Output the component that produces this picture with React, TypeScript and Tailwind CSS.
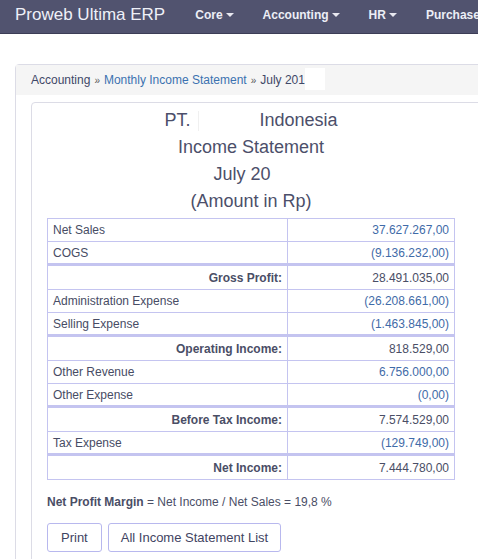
import React from "react"

type Row = { label: string; value: string; total?: boolean }

const rows: Row[] = [
  { label: "Net Sales", value: "37.627.267,00" },
  { label: "COGS", value: "(9.136.232,00)" },
  { label: "Gross Profit:", value: "28.491.035,00", total: true },
  { label: "Administration Expense", value: "(26.208.661,00)" },
  { label: "Selling Expense", value: "(1.463.845,00)" },
  { label: "Operating Income:", value: "818.529,00", total: true },
  { label: "Other Revenue", value: "6.756.000,00" },
  { label: "Other Expense", value: "(0,00)" },
  { label: "Before Tax Income:", value: "7.574.529,00", total: true },
  { label: "Tax Expense", value: "(129.749,00)" },
  { label: "Net Income:", value: "7.444.780,00", total: true },
]

function Caret() {
  return <span className="ml-[3px] inline-block border-x-[4px] border-t-[4px] border-x-transparent border-t-[#e8e8f0] align-middle" />
}

function Navbar() {
  return (
    <nav className="flex h-[34px] items-center overflow-hidden whitespace-nowrap border-b border-[#3c3d56] bg-[#51536f] pb-[4px]">
      <span className="ml-[15px] text-[17px] text-[#eef0f8]">Proweb Ultima ERP</span>
      <div className="ml-[30px] flex items-center gap-[29px] text-[12px] font-bold text-[#eceef6]">
        <span>Core<Caret /></span>
        <span>Accounting<Caret /></span>
        <span>HR<Caret /></span>
        <span>Purchase</span>
      </div>
    </nav>
  )
}

export default function App() {
  return (
    <div className="h-[559px] w-[478px] overflow-hidden bg-white font-['Liberation_Sans',Arial,sans-serif]">
      <Navbar />
      <div className="ml-[15px] mt-[30px] w-[560px] rounded-[4px] border border-[#dcdce6] pb-6">
        <div className="flex h-[30px] items-center bg-[#f5f5f5] px-[15px] text-[12px] text-[#3f4868]">
          <span>Accounting</span>
          <span className="mx-[4px] text-[10px] text-[#555]">»</span>
          <span className="text-[#3b72b0]">Monthly Income Statement</span>
          <span className="mx-[4px] text-[10px] text-[#555]">»</span>
          <span>July 201</span>
          <span className="-mt-[2px] h-[22px] w-[20px] bg-white" />
        </div>
        <div className="ml-[15px] mt-[7px] w-[520px] rounded-[4px] border border-[#dcdce6] px-[15px] pt-[4px] pb-4">
          <div className="w-[408px] text-center text-[18px] leading-[27px] text-[#4c4f6a]">
            <div>PT.<span className="ml-[8px] mr-[60px] inline-block h-[20px] w-[1px] bg-[#f0f0f0] align-middle" />Indonesia</div>
            <div>Income Statement</div>
            <div>July 20<span className="inline-block w-[18px]" /></div>
            <div>(Amount in Rp)</div>
          </div>
          <table className="mt-[3px] w-[408px] border-collapse text-[12px]">
            <tbody>
              {rows.map((r) => (
                <tr key={r.label}>
                  <td
                    className={`w-[240px] border border-[#c4c4f0] px-[5px] py-0 ${
                      r.total ? "h-[25px] border-t-[3px] text-right font-bold text-[#4a4e66]" : "h-[23px] text-[#474c64]"
                    }`}
                  >
                    {r.label}
                  </td>
                  <td
                    className={`border border-[#c4c4f0] px-[5px] py-0 text-right ${
                      r.total ? "h-[25px] border-t-[3px] text-[#4a4e66]" : "h-[23px] text-[#3f6ba8]"
                    }`}
                  >
                    {r.value}
                  </td>
                </tr>
              ))}
            </tbody>
          </table>
          <p className="mt-[13px] text-[12px] text-[#4a4e66]">
            <span className="font-bold">Net Profit Margin</span> = Net Income / Net Sales = 19,8 %
          </p>
          <div className="mt-[12px] flex gap-[6px] text-[13px] text-[#3f4462]">
            <button className="h-[29px] rounded-[3px] border border-[#b8b8ee] bg-white px-[13px]">Print</button>
            <button className="h-[29px] rounded-[3px] border border-[#b8b8ee] bg-white px-[12px]">All Income Statement List</button>
          </div>
        </div>
      </div>
    </div>
  )
}
